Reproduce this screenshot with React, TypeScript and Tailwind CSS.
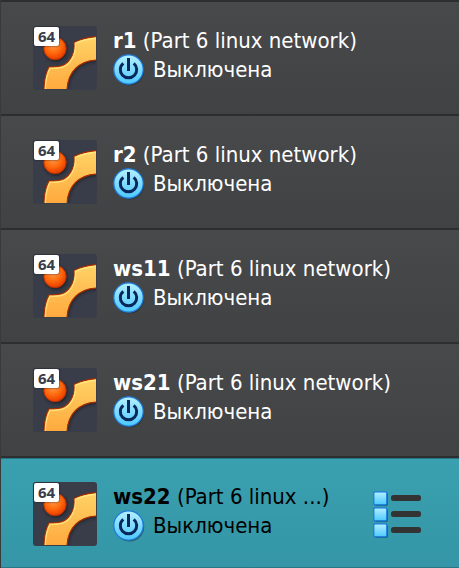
import React from "react";

type Machine = { name: string; group: string; selected?: boolean };

const machines: Machine[] = [
  { name: "r1", group: "(Part 6 linux network)" },
  { name: "r2", group: "(Part 6 linux network)" },
  { name: "ws11", group: "(Part 6 linux network)" },
  { name: "ws21", group: "(Part 6 linux network)" },
  { name: "ws22", group: "(Part 6 linux ...)", selected: true },
];

function Gradients() {
  return (
    <svg width="0" height="0" className="absolute" aria-hidden="true">
      <defs>
        <linearGradient id="ring" x1="0" y1="0" x2="0" y2="1">
          <stop offset="0" stopColor="#ffd366" />
          <stop offset="1" stopColor="#ffa73c" />
        </linearGradient>
        <radialGradient id="ball" cx="0.42" cy="0.35" r="0.65">
          <stop offset="0" stopColor="#ff9a4a" />
          <stop offset="0.55" stopColor="#ff6a0c" />
          <stop offset="1" stopColor="#e83c00" />
        </radialGradient>
        <linearGradient id="sky" x1="0" y1="0" x2="0" y2="1">
          <stop offset="0" stopColor="#b4f0ff" />
          <stop offset="1" stopColor="#4cc8ff" />
        </linearGradient>
        <filter id="soft" x="-30%" y="-30%" width="160%" height="160%">
          <feGaussianBlur stdDeviation="1.6" />
        </filter>
        <clipPath id="tile">
          <rect x="1" y="1" width="62" height="62" rx="2" />
        </clipPath>
      </defs>
    </svg>
  );
}

const ringPath =
  "M66 10.5C56 11 48 13 41 16.500C42.500 27 36 40 25 40.500C21 41 19 41 16 41C12.500 47 11 55 11 66H34C34 46 46 34 66 34Z";

function OsIcon() {
  return (
    <div className="relative size-16 shrink-0">
      <svg viewBox="0 0 64 64" className="size-16" aria-hidden="true">
        <rect width="64" height="64" rx="3" fill="#393d49" />
        <g clipPath="url(#tile)">
          <path d={ringPath} fill="#181a22" opacity="0.8" filter="url(#soft)" transform="translate(1 1.5)" />
          <path d={ringPath} fill="url(#ring)" stroke="#a92c00" strokeWidth="1.2" />
          <path
            d="M64 12.200C56 12.800 48 14.800 42.300 17.300C43 29 37 41.500 25 42C21 42.300 19 42.300 17 42.300C14 48 12.300 56 12.300 64"
            fill="none"
            stroke="#fff08a"
            strokeWidth="1.400"
            opacity="0.7"
          />
          <circle cx="23" cy="24" r="11.500" fill="#181a22" opacity="0.8" filter="url(#soft)" />
          <circle cx="22" cy="22.500" r="11.200" fill="url(#ball)" stroke="#b83200" strokeWidth="1" />
        </g>
      </svg>
      <span className="absolute top-px left-px flex h-[19px] w-[25px] items-center justify-center rounded-[2px] bg-white font-['Noto_Sans',sans-serif] text-[15px] leading-none font-bold text-[#393d49] shadow-[0_0_2px_#15171f]">
        64
      </span>
    </div>
  );
}

function PowerIcon() {
  return (
    <svg viewBox="0 0 32 32" className="size-8 shrink-0" aria-hidden="true">
      <circle cx="16.500" cy="16.800" r="14.700" fill="#222" opacity="0.5" />
      <circle cx="15.500" cy="15.500" r="14.700" fill="url(#sky)" stroke="#1c78d8" strokeWidth="1.200" />
      <path d="M10.300 9.300A8.200 8.200 0 1 0 20.700 9.300" fill="none" stroke="#08275a" strokeWidth="3" />
      <path d="M15.500 4V17" stroke="#08275a" strokeWidth="3" />
    </svg>
  );
}

function MenuIcon() {
  return (
    <svg viewBox="0 0 50 48" className="h-12 w-[50px]" aria-hidden="true">
      {[0, 16, 32].map((y) => (
        <g key={y}>
          <rect x="2" y={y + 2} width="13" height="13" rx="2" fill="#17475a" opacity="0.7" />
          <rect x="0.800" y={y + 0.8} width="13" height="13" rx="1.500" fill="url(#sky)" stroke="#1678dc" strokeWidth="1.200" />
          <rect x="18" y={y + 4} width="30" height="6" rx="2.500" fill="#333" />
        </g>
      ))}
    </svg>
  );
}

function MachineRow({ name, group, selected }: Machine) {
  return (
    <li
      className={
        selected
          ? "flex items-start border-y border-[#287985] bg-linear-to-b from-[#3aa0b0] to-[#3496a6] pt-[23px] pr-9 pb-[21px] pl-8 text-black"
          : "flex items-start bg-linear-to-b from-[#48494b] to-[#414244] py-6 pr-9 pl-8 text-white"
      }
    >
      <OsIcon />
      <div className="ml-4 min-w-0 flex-1 text-[22px]">
        <p className="truncate pt-0.5 leading-[26px]">
          <strong>{name}</strong> {group}
        </p>
        <p className="flex items-center gap-2 leading-8">
          <PowerIcon />
          Выключена
        </p>
      </div>
      {selected && (
        <button type="button" aria-label="Меню машины" className="mt-[9px] shrink-0 cursor-pointer">
          <MenuIcon />
        </button>
      )}
    </li>
  );
}

export default function App() {
  return (
    <main className="min-h-screen bg-[#2d2e30] font-['DejaVu_Sans_Condensed','DejaVu_Sans',sans-serif]">
      <Gradients />
      <ul className="flex flex-col gap-0.5 border-l border-[#393a3c] pt-0.5">
        {machines.map((machine) => (
          <MachineRow key={machine.name} {...machine} />
        ))}
      </ul>
    </main>
  );
}
